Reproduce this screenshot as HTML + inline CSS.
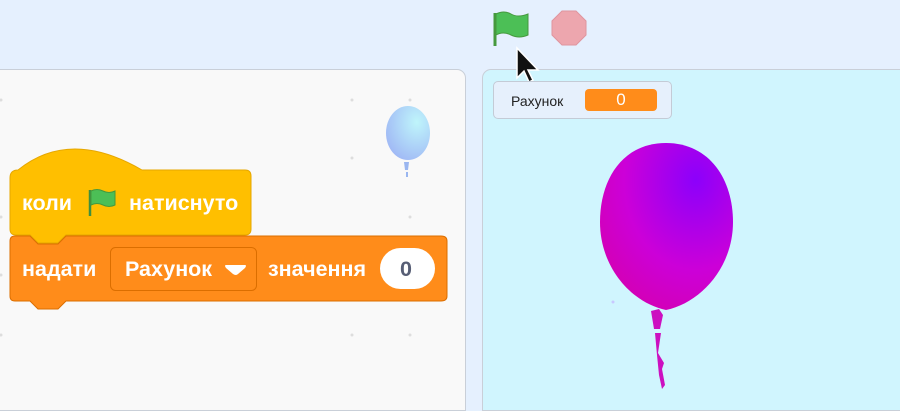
<!DOCTYPE html>
<html><head><meta charset="utf-8"><style>
body{margin:0;width:900px;height:400px;overflow:hidden;background:#e5f0fe;font-family:"Liberation Sans",sans-serif;position:relative}
.code{position:absolute;left:-10px;top:69px;width:474px;height:340px;background:#f9f9f9;border:1px solid #c9cfd8;border-radius:0 9px 0 0}
.stage{position:absolute;left:482px;top:69px;width:430px;height:340px;background:#d0f5fe;border:1px solid #c9cfd8;border-radius:9px 0 0 0}
.mon{position:absolute;left:493px;top:81px;width:179px;height:38px;box-sizing:border-box;background:#e6f0fc;border:1px solid #c4cbd6;border-radius:5px}
.mon span.l{position:absolute;left:17px;top:11px;font-size:14px;color:#222}
.mon span.v{position:absolute;left:91px;top:7px;width:72px;height:22px;background:#ff8c1a;border-radius:4px;color:#fff;text-align:center;font-size:17px;line-height:22px}
.t{position:absolute;color:#fff;font-weight:bold;font-size:21.5px}
</style></head><body>
<div class="code"></div>
<div class="stage"></div>
<svg width="900" height="400" style="position:absolute;left:0;top:0">
<defs>
<radialGradient id="g1" cx="0.72" cy="0.22" r="0.9"><stop offset="0" stop-color="#8c00fb"/><stop offset="0.6" stop-color="#cc00d8"/><stop offset="1" stop-color="#d400b0"/></radialGradient>
<radialGradient id="g2" cx="0.7" cy="0.3" r="0.8"><stop offset="0" stop-color="#bff5fb"/><stop offset="1" stop-color="#a0b8f5"/></radialGradient>
</defs>
<g fill="#ddd"><circle cx="1" cy="100" r="1.5"/><circle cx="352" cy="100" r="1.5"/><circle cx="352" cy="158" r="1.5"/><circle cx="410" cy="100" r="1.5"/><circle cx="410" cy="217" r="1.5"/><circle cx="1" cy="217" r="1.5"/><circle cx="1" cy="275" r="1.5"/><circle cx="352" cy="335" r="1.5"/><circle cx="410" cy="335" r="1.5"/><circle cx="1" cy="335" r="1.5"/></g>
<ellipse cx="408" cy="133" rx="22" ry="27" fill="url(#g2)"/>
<path d="M404 162 l5 0 l-1 8 l-3 0z M406 172 l2 0 l0 5 l-2 0z" fill="#9ab6f0"/>
<path d="M10 178 Q10 170 18 170 Q70 128 142 170 L245 170 Q251 170 251 176 L251 229 Q251 235 245 235 L66 235 L58 243 L38 243 L30 235 L16 235 Q10 235 10 229 Z" fill="#ffbf00" stroke="#e6a700" stroke-width="1"/>
<path d="M10 241 Q10 236 15 236 L30 236 L38 244 L58 244 L66 236 L441 236 Q447 236 447 241 L447 296 Q447 301 441 301 L66 301 L58 309 L38 309 L30 301 L15 301 Q10 301 10 296 Z" fill="#ff8c1a" stroke="#db6e00" stroke-width="1"/>
<rect x="110.5" y="247.5" width="146" height="43" rx="5" fill="#ff8c1a" stroke="#db6e00"/>
<path d="M226 265 h19 q2 0 0 3 l-7 6 q-2 2 -5 0 l-7 -6 q-2 -3 0 -3z" fill="#fff"/>
<rect x="380" y="248" width="55" height="41" rx="20.5" fill="#fff"/>
<path d="M90 190 v26" stroke="#3e8f3e" stroke-width="2.5"/>
<path d="M91 191 q6 -3 12 0 q6 3 12 0 v14 q-6 3 -12 0 q-6 -3 -12 0z" fill="#4cbf56" stroke="#45993d" stroke-width="1"/>
<path d="M495 13 v33" stroke="#45993d" stroke-width="3"/>
<path d="M496 14 q8 -4 15 0 q7 4 17 0 v21 q-9 4 -17 0 q-8 -4 -15 0z" fill="#4cbf56" stroke="#45993d"/>
<polygon points="562,11 576,11 586,21 586,35 576,45 562,45 552,35 552,21" fill="#eda6ae" stroke="#e0959e"/>
<path d="M666 143 C710 143 733 180 733 222 C733 268 700 303 666 310 C632 303 600 268 600 222 C600 180 622 143 666 143Z" fill="url(#g1)"/>
<path d="M651 311 l8 -2 l4 6 l-3 14 l-6 0 z M655 333 l6 0 l-3 20 l6 10 l-2 6 l3 16 l-3 4 l-3 -14 l-2 -20 z" fill="#cc10c0"/>
<circle cx="613" cy="302" r="1.5" fill="#c8c8ff"/>
<path d="M517 48 v30 l7 -7 l5 11 l4 -2 l-5 -10 l10 0 z" fill="#111" stroke="#fff" stroke-width="1.5"/>
</svg>
<div class="t" style="left:22px;top:191px">коли</div>
<div class="t" style="left:129px;top:191px">натиснуто</div>
<div class="t" style="left:22px;top:257px">надати</div>
<div class="t" style="left:125px;top:257px">Рахунок</div>
<div class="t" style="left:268px;top:257px">значення</div>
<div class="t" style="left:400px;top:257px;color:#575e75">0</div>
<div class="mon"><span class="l">Рахунок</span><span class="v">0</span></div>
</body></html>
